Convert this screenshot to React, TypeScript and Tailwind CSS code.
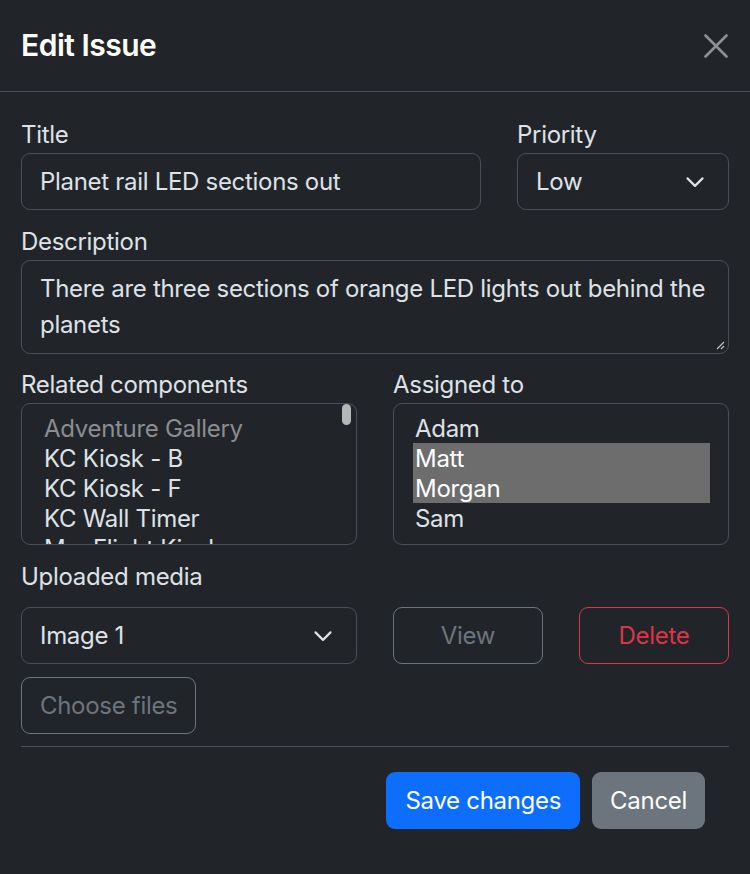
import { useState } from "react";

const components = [
  { name: "Adventure Gallery", muted: true },
  { name: "KC Kiosk - B" },
  { name: "KC Kiosk - F" },
  { name: "KC Wall Timer" },
  { name: "MagFlight Kiosk" },
];

const people = ["Adam", "Matt", "Morgan", "Sam"];

function Chevron() {
  return (
    <svg width="20" height="15" viewBox="0 0 16 12" fill="none" className="shrink-0">
      <path d="m2 3.5 6 6 6-6" stroke="#dee2e6" strokeWidth="1.7" strokeLinecap="round" strokeLinejoin="round" />
    </svg>
  );
}

export default function App() {
  const [title] = useState("Planet rail LED sections out");
  const [assigned] = useState(["Matt", "Morgan"]);

  return (
    <div
      className="min-h-screen bg-[#212529] text-[#dee2e6] text-[24px] leading-[36px] tracking-[-0.3px]"
      style={{ fontFamily: "Inter, 'Liberation Sans', sans-serif" }}
    >
      {/* header */}
      <div className="flex items-center justify-between h-[92px] px-[21px] border-b border-[#495057]">
        <h1 className="text-[30px] leading-[45px] font-semibold text-white tracking-[-0.5px]">Edit Issue</h1>
        <button className="w-[26px] h-[26px] flex items-center justify-center">
          <svg width="24" height="24" viewBox="0 0 24 24">
            <path d="M1.5 1.5 22.5 22.5M22.5 1.5 1.5 22.5" stroke="#8e9093" strokeWidth="2.6" strokeLinecap="round" />
          </svg>
        </button>
      </div>

      <div className="px-[21px] pt-[25px]">
        {/* title + priority */}
        <div className="grid grid-cols-[460px_212px] gap-x-9">
          <div>
            <label className="block">Title</label>
            <div className="h-[57px] border border-[#495057] rounded-[9px] px-[18px] flex items-center">
              {title}
            </div>
          </div>
          <div>
            <label className="block">Priority</label>
            <div className="h-[57px] border border-[#495057] rounded-[9px] pl-[18px] pr-[23px] flex items-center justify-between">
              <span>Low</span>
              <Chevron />
            </div>
          </div>
        </div>

        {/* description */}
        <div className="mt-[14px]">
          <label className="block">Description</label>
          <div className="relative h-[94px] border border-[#495057] rounded-[9px] px-[18px] pt-[10px]">
            There are three sections of orange LED lights out behind the planets
            <svg width="10" height="10" viewBox="0 0 10 10" className="absolute right-[3px] bottom-[3px]">
              <path d="M9 2 2 9M9 6 6 9" stroke="#bfc2c5" strokeWidth="1.2" />
            </svg>
          </div>
        </div>

        {/* lists */}
        <div className="mt-[13px] grid grid-cols-2 gap-x-9">
          <div>
            <label className="block">Related components</label>
            <div className="relative h-[142px] overflow-hidden border border-[#495057] rounded-[9px] pl-[20px] pr-[18px] pt-[10px] leading-[30px]">
              {components.map((c) => (
                <div key={c.name} className={"px-[2px] " + (c.muted ? "text-[#8a8d91]" : "")}>
                  {c.name}
                </div>
              ))}
              <div className="absolute right-[5px] top-[0px] w-[9px] h-[21px] rounded-full bg-[#b4b6b8]" />
            </div>
          </div>
          <div>
            <label className="block">Assigned to</label>
            <div className="h-[142px] overflow-hidden border border-[#495057] rounded-[9px] pl-[19px] pr-[18px] pt-[9px] leading-[30px]">
              {people.map((p) => (
                <div
                  key={p}
                  className={"px-[2px] pt-[2px] h-[30px] " + (assigned.includes(p) ? "bg-[#6d6d6d] text-white" : "")}
                >
                  <span className="block leading-[28px]">{p}</span>
                </div>
              ))}
            </div>
          </div>
        </div>

        {/* media */}
        <div className="mt-[14px]">
          <label className="block">Uploaded media</label>
          <div className="mt-[12px] grid grid-cols-[336px_150px_150px] gap-x-9">
            <div className="h-[57px] border border-[#495057] rounded-[9px] pl-[18px] pr-[23px] flex items-center justify-between">
              <span>Image 1</span>
              <Chevron />
            </div>
            <button className="h-[57px] border border-[#6c757d] rounded-[9px] text-[#6c757d]">View</button>
            <button className="h-[57px] border border-[#dc3545] rounded-[9px] text-[#dc3545]">Delete</button>
          </div>
          <button className="mt-[13px] h-[57px] px-[18px] border border-[#6c757d] rounded-[9px] text-[#6c757d]">
            Choose files
          </button>
        </div>

        {/* footer */}
        <div className="mt-3 border-t border-[#495057] pt-[25px] pr-6 flex justify-end gap-3">
          <button className="h-[57px] px-[19px] rounded-[9px] bg-[#0d6efd] text-white">Save changes</button>
          <button className="h-[57px] px-[18px] rounded-[9px] bg-[#6c757d] text-white">Cancel</button>
        </div>
      </div>
    </div>
  );
}
